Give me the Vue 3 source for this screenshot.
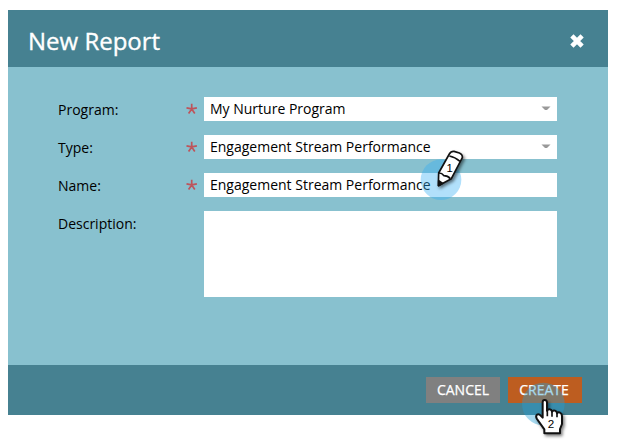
<script setup>
const fields = [
  { label: 'Program:', value: 'My Nurture Program', select: true },
  { label: 'Type:', value: 'Engagement Stream Performance', select: true },
  { label: 'Name:', value: 'Engagement Stream Performance', select: false },
]
</script>

<template>
  <div class="page">
    <section class="dialog">
      <header class="header">
        <h1 class="title">New Report</h1>
        <svg class="close" width="16" height="16" viewBox="0 0 16 16">
          <path d="M2.9 2.9 13.1 13.1M13.1 2.9 2.9 13.1" stroke="#fff" stroke-width="4.6" />
        </svg>
      </header>
      <div class="body">
        <div v-for="f in fields" :key="f.label" class="row">
          <span class="label">{{ f.label }}</span>
          <svg class="star" width="12" height="12" viewBox="0 0 12 12">
            <path d="M5.7 5.9V.7M5.7 5.9.5 4.9M5.7 5.9l5.2-1M5.7 5.9 2.6 10.4M5.7 5.9l3.1 4.5" stroke="#be545b" stroke-width="1.7" />
          </svg>
          <div class="input">
            <span class="value">{{ f.value }}</span>
            <svg v-if="f.select" class="arrow" width="10" height="5" viewBox="0 0 10 5">
              <path d="M.5.5h9L6 4H4z" fill="#999" />
            </svg>
          </div>
        </div>
        <div class="row tall">
          <span class="label">Description:</span>
          <span class="star"></span>
          <div class="input"></div>
        </div>
      </div>
      <footer class="footer">
        <button class="btn cancel">CANCEL</button>
        <button class="btn create">CREATE</button>
      </footer>
    </section>

    <svg class="marker pencil" width="80" height="70" viewBox="0 0 240 210">
      <circle cx="93" cy="119" r="61" fill="#32aef4" fill-opacity=".38" />
      <g class="shadow" stroke="#111" stroke-width="5" stroke-linejoin="round">
        <path d="M85 137 86 99 118 42Q123 33 132 34L148 39Q158 43 157 53L124 116Z" fill="#fff" />
        <path d="M118 48Q135 51 150 64M87 99Q96 99 102 107 113 107 121 116" fill="none" />
        <path d="M86 122 98 130 86 137Z" fill="#111" />
      </g>
      <text x="119" y="95" font-size="34">1</text>
    </svg>

    <svg class="marker hand" width="100" height="78" viewBox="0 0 300 234">
      <circle cx="130" cy="117" r="64" fill="#249fd8" fill-opacity=".4" />
      <path
        class="shadow"
        d="M128 158V112Q128 105 134 105T141 112V137Q144 132 149 133 155 134 156 140 159 135 165 137 171 139 171 145 175 140 180 143 186 146 186 153V177L180 192V205H133V193L111 162Q106 153 111 149 117 146 122 152Z"
        fill="#fff" stroke="#111" stroke-width="6" stroke-linejoin="round"
      />
      <path d="M142 135V154M156 139V155M171 145V157" fill="none" stroke="#111" stroke-width="5" />
      <text x="153" y="189" font-size="35">2</text>
    </svg>
  </div>
</template>

<style>
body { background: #fff; }
</style>

<style scoped>
.page {
  position: relative;
  box-sizing: border-box;
  width: 618px;
  height: 443px;
  padding: 10px 10px 28px 8px;
  overflow: hidden;
  font-family: "Open Sans", "Noto Sans", sans-serif;
  font-size: 14px;
  color: #000;
}
.dialog {
  display: flex;
  flex-direction: column;
  height: 405px;
  background: #88c1cf;
}
.header {
  display: flex;
  align-items: center;
  justify-content: space-between;
  height: 57px;
  padding: 0 23px 0 20px;
  background: #468191;
}
.title {
  margin: 0;
  padding-top: 4px;
  color: #fff;
  font-size: 24px;
  font-weight: 400;
  line-height: 32px;
  -webkit-text-stroke: 0.35px #fff;
}
.close { margin-top: 5px; }
.body {
  display: flex;
  flex: 1;
  flex-direction: column;
  gap: 14px;
  padding: 30px 51px 0 50px;
}
.row {
  display: grid;
  grid-template-columns: 128px 18px 353px;
  grid-template-rows: 100%;
  height: 24px;
}
.tall { height: 86px; }
.label { padding-top: 1px; line-height: 24px; }
.star { margin-top: 6px; }
.input {
  display: flex;
  align-items: flex-start;
  justify-content: space-between;
  padding: 0 6px;
  background: #fff;
}
.value { line-height: 24px; }
.arrow { margin-top: 9px; }
.footer {
  display: flex;
  align-items: center;
  gap: 8px;
  justify-content: flex-end;
  height: 50px;
  padding-right: 26px;
  background: #468191;
}
.btn {
  width: 74px;
  height: 26px;
  padding: 0;
  border: 0;
  color: #fff;
  font: 14px/26px "Open Sans", sans-serif;
  -webkit-text-stroke: 0.25px #fff;
}
.cancel { background: #808080; }
.create { padding-right: 2px; background: #bd5d20; }
.marker { position: absolute; overflow: visible; }
.marker text {
  font-family: "Liberation Sans", Arial, sans-serif;
  text-anchor: middle;
  fill: #000;
}
.pencil { left: 410px; top: 140px; }
.hand { left: 500px; top: 365px; }
.shadow { filter: drop-shadow(5px 6px 4px rgba(0, 0, 0, 0.5)); }
</style>
